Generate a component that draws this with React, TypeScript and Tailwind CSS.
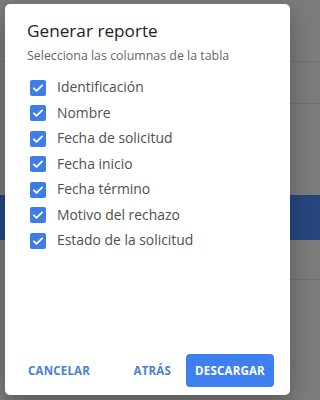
const columns = [
  "Identificación",
  "Nombre",
  "Fecha de solicitud",
  "Fecha inicio",
  "Fecha término",
  "Motivo del rechazo",
  "Estado de la solicitud",
]

function CheckBox() {
  return (
    <span className="flex h-[16px] w-[16px] shrink-0 items-center justify-center rounded-[2px] bg-[#3d7ce9]">
      <svg viewBox="0 0 24 24" className="h-[14px] w-[14px]" fill="none" stroke="white" strokeWidth="3.2" strokeLinecap="round" strokeLinejoin="round">
        <path d="M5 12.5l4.5 4.5L19 7.5" />
      </svg>
    </span>
  )
}

export default function App() {
  return (
    <div className="relative h-screen min-h-[400px] w-full min-w-[294px] overflow-hidden bg-[#7c7c7c]" style={{ fontFamily: "'Open Sans', 'Noto Sans', sans-serif" }}>
      {/* dimmed page behind the dialog */}
      <div className="flex flex-col">
        <div className="h-[62px] border-b border-[#727272]" />
        <div className="h-[42px] border-b border-[#727272]" />
        <div className="h-[91px]" />
        <div className="h-[45px] bg-[#27467f]" />
        <div className="h-[40px] border-b border-[#727272]" />
      </div>

      <div className="absolute left-[5px] top-[4px] flex h-[391px] w-[285px] flex-col rounded-[5px] bg-white shadow-[0_8px_24px_rgba(0,0,0,0.3)]">
        <div className="px-[22px] pt-[15px]">
          <h2 className="text-[17.2px] leading-[24px] text-[#222]">Generar reporte</h2>
          <p className="mt-[5px] text-[12.4px] leading-[16px] text-[#666]">Selecciona las columnas de la tabla</p>
        </div>

        <ul className="mt-[11px] flex flex-col pl-[25px]">
          {columns.map((c) => (
            <li key={c} className="flex h-[25.5px] items-center gap-[11px]">
              <CheckBox />
              <span className="text-[13.9px] text-[#505050]">{c}</span>
            </li>
          ))}
        </ul>

        <div className="mt-auto flex items-center pb-[8px] pl-[23px] pr-[16px]">
          <button className="text-[11.5px] font-bold tracking-[0.2px] text-[#4a7fd6]">CANCELAR</button>
          <button className="ml-auto mr-[15px] text-[11.5px] font-bold tracking-[0.2px] text-[#4a7fd6]">ATRÁS</button>
          <button className="h-[33px] w-[88px] rounded-[4px] bg-[#3f80f0] text-[11.5px] font-bold tracking-[0.2px] text-white">DESCARGAR</button>
        </div>
      </div>
    </div>
  )
}
